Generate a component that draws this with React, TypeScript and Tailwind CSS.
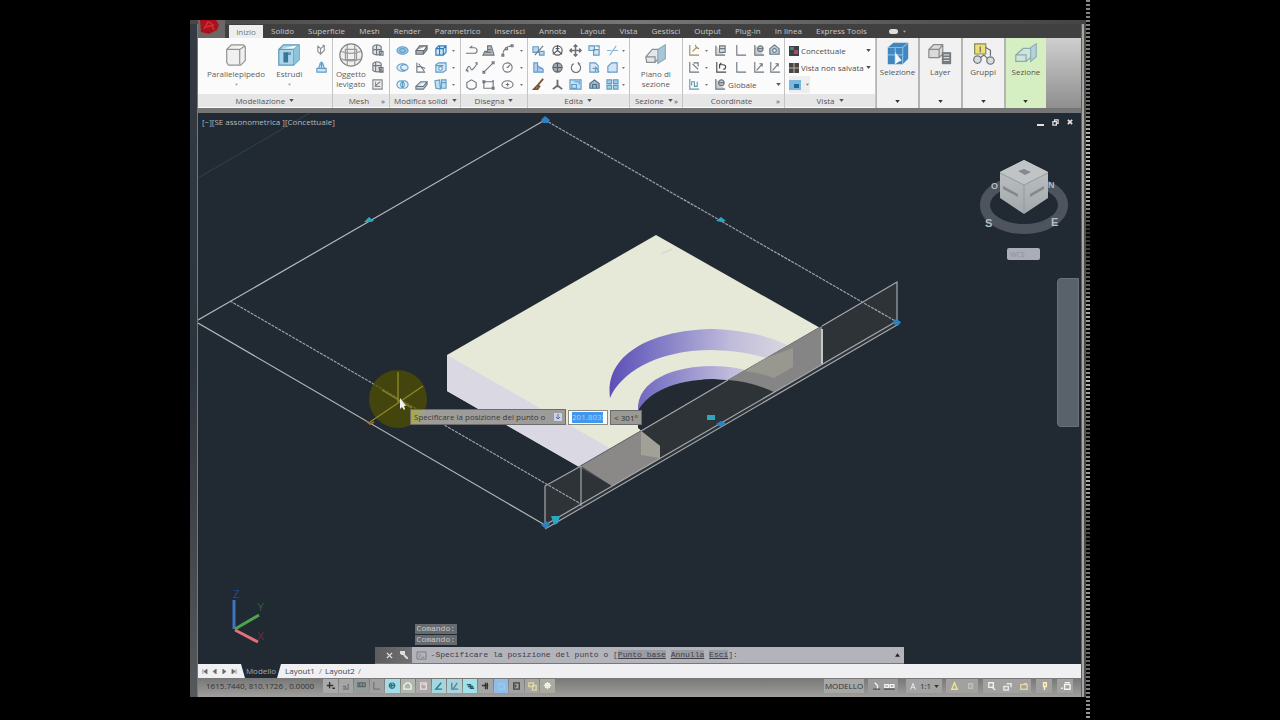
import type { ReactNode } from 'react'

const menuTabs = [
  'Solido',
  'Superficie',
  'Mesh',
  'Render',
  'Parametrico',
  'Inserisci',
  'Annota',
  'Layout',
  'Vista',
  'Gestisci',
  'Output',
  'Plug-in',
  'In linea',
  'Express Tools',
]

const G = '#6f7780'
const B = '#5f9cc8'

const glyphs: Record<string, ReactNode> = {
  polysolid: <path d="M3 2v6l3 3V5l4-3v5l-4 4M3 2l3 3M10 2L8 1" stroke="#8d9094" />,
  presspull: <path d="M2 12V8h2l1-4h4l1 4h2v4zM4 8h6M7 1v6M5 3l2-2 2 2" stroke={B} fill="#cfe3f2" />,
  moreSmooth: <path d="M2 3a5 4 0 0 1 9 0v7a5 3 0 0 1-9 0zM2 6h9M6 1v11M9 8h4v4H9z" stroke={G} fill="#dfe1e3" />,
  refine: <path d="M2 3a5 4 0 0 1 9 0v7a5 3 0 0 1-9 0zM2 5h9M5 1v11M8 7l5 5M9 7h4v5H9z" stroke={G} fill="#e6e6e6" />,
  crease: <path d="M2 2h10v10H2zM4 9l6-5M5 4v5h5" stroke="#85898d" fill="#ececec" />,
  union: <path d="M1 7a6 4 0 1 0 12 0a6 4 0 1 0-12 0M4 7a3 2 0 1 0 6 0a3 2 0 1 0-6 0" stroke={B} fill="#9cc8e8" />,
  subtract: <path d="M1 7a6 4 0 1 0 12 0a6 4 0 1 0-12 0M5 7a4 3 0 0 1 7-2M5 7a4 3 0 0 0 7 2" stroke={B} fill="#dcecf6" />,
  intersect: <path d="M1 7a4 4 0 1 0 8 0a4 4 0 1 0-8 0M5 7a4 4 0 1 0 8 0a4 4 0 1 0-8 0M7 4v6" stroke={B} fill="#e2edf4" />,
  thicken: <path d="M1 7l4-5h8l-3 5zM1 7v4h8l4-5V2M9 7v4" stroke="#666c72" fill="#a9adb2" />,
  slice: <path d="M2 2v10h9M4 3l6 8M2 6h4l5 2" stroke={G} />,
  extract: <path d="M1 9l5-5h7l-4 5zM1 9v3h8l4-5V4" stroke={G} fill="#bcd9ec" />,
  fillet: <path d="M2 5l3-3h8v7l-3 3H2zM2 5h8v7M10 5l3-3M6 2v10" stroke="#2e7ab8" fill="#cde5f6" />,
  taper: <path d="M2 4l3-2h8v8l-3 2H2zM2 5h8M5 8a2 2 0 1 0 4 0a2 2 0 1 0-4 0" stroke={B} fill="#d3e5f0" />,
  shell: <path d="M1 3l5-1 1 10-5-1zM8 2h5v9H8zM8 5h5" stroke={B} fill="#c1def2" />,
  pline: <path d="M1 10h9a3 3 0 0 0 0-6H5M5 4l3-2" stroke={G} />,
  helix: <path d="M1 12h12L10 2H6v6H3zM4 9h6M6 6h4" stroke={G} fill="#b7babd" />,
  arc: <path d="M2 12C2 6 6 2 12 2M1 11h2v2H1zM5 4h2v2H5zM11 1h2v2h-2z" stroke={G} />,
  spline: <path d="M1 11c3-7 4-6 5-3s3 1 7-5M1 10h2v2M11 2h2v2" stroke={G} />,
  line: <path d="M2 12L12 2M1 11h2v2H1zM11 1h2v2h-2z" stroke={G} />,
  circle: <path d="M2 7a5 5 0 1 0 10 0a5 5 0 1 0-10 0M7 7l3-3M6 7h2" stroke={G} />,
  polygon: <path d="M7 2l5 3v5l-3 2H5l-3-2V5z" stroke={G} />,
  rect: <path d="M2 4h10v7H2zM1 3h2v2H1zM11 3h2M11 10h2v2h-2z" stroke={G} />,
  ellipse: <path d="M1 7a6 4 0 1 0 12 0a6 4 0 1 0-12 0M7 5v4M5 7h4" stroke={G} />,
  stretch: (
    <>
      <path d="M1 3h6v6H1zM8 8h5v4H8z" stroke={B} fill="#bcd6e8" />
      <path d="M12 2L3 12" stroke={G} />
    </>
  ),
  align: <path d="M2 2v10h4V2zM6 5l6 4v3H6M8 8h4" stroke={B} fill="#b7cdeb" />,
  brush: <path d="M12 1L6 8M6 8l-4 4h4l2-3z" stroke="#7a5635" fill="#caa062" strokeWidth="2" />,
  gizmo: <path d="M2 7a5 5 0 1 0 10 0a5 5 0 1 0-10 0M7 1v6M7 7l-5 4M7 7l5 4M5 5h4" stroke="#555b61" />,
  move: <path d="M7 1v12M1 7h12M5 3l2-2 2 2M5 11l2 2 2-2M3 5L1 7l2 2M11 5l2 2-2 2" stroke="#6c7277" strokeWidth="1.6" />,
  copy: <path d="M1 2h6v5H1zM6 6h6v6H6zM8 2h4v3" stroke={B} fill="#d6e4ee" />,
  trim: <path d="M1 7h5M8 7h5M11 2L4 12" stroke="#8eb6d2" />,
  rotate3d: <path d="M2 7a5 5 0 1 0 10 0a5 5 0 1 0-10 0M2 7h10M7 2v10" stroke="#5a6066" fill="#a5aab0" />,
  rotate: <path d="M5 3a5 5 0 1 0 5 0M10 3V1M10 3h2M5 3L3 4" stroke="#6a6e72" />,
  offset: <path d="M2 2h6l3 3v7H2zM5 8h3v4M8 6l4 6" stroke={B} fill="#dbe6ef" />,
  chamfer: <path d="M2 12V6l4-4h6v10z" stroke={B} fill="#d5e4f5" />,
  triad: <path d="M7 2v6M7 8l-5 4M7 8l5 4M5 9h4" stroke="#686d72" strokeWidth="2" />,
  scale: <path d="M1 2h12v10H1zM3 7h5v4H3zM6 4h5v3" stroke={B} fill="#bfe0f1" />,
  mirror: <path d="M2 11V6l5-4 5 4v5zM5 11V7h4v4" stroke="#506d86" fill="#9cb8d0" />,
  array: <path d="M1 2h5v4H1zM8 2h5v4H8zM1 8h5v4H1zM8 8h5v4H8z" stroke={B} fill="#a4d0ec" />,
  ucs: <path d="M3 1v11h10M6 3l6 6M7 2h5v4" stroke={G} />,
  ucsWave: <path d="M3 1v11h10M5 8V4h3v5h3V4" stroke="#6298ad" />,
  ucsStar: <path d="M3 1v11h10M6 8l5-5M9 1l1 3 3 1" stroke="#a58a58" />,
  ucsWorld: <path d="M3 1v11h10M6 5a3 3 0 1 0 6 0a3 3 0 1 0-6 0M6 5h6" stroke={G} fill="#c9ced3" />,
  ucsFace: <path d="M2 2v10h10M6 2h6v7H6zM6 5h6" stroke={G} fill="#d8dadc" />,
  ucsAxis: <path d="M3 1v11h10" stroke={G} />,
  ucsView: <path d="M2 5l5-4 5 4v6H2zM5 7a2 2 0 1 0 4 0a2 2 0 1 0-4 0" stroke="#64788a" fill="#bac8d4" />,
  ucsPrev: <path d="M3 1v11h10M6 8V4h4a2 2 0 0 1 0 5M6 4l2-2" stroke="#454a50" />,
  ucsZ: <path d="M3 1v11h10M5 10l6-7M8 3h3v3" stroke={G} />,
}

function Icon({ name }: { name: string }) {
  return (
    <svg viewBox="0 0 14 14" className="h-[13px] w-[13px] shrink-0" fill="none" strokeWidth="1.2" aria-hidden="true">
      {glyphs[name]}
    </svg>
  )
}

function Caret({ className = '' }: { className?: string }) {
  return (
    <svg viewBox="0 0 6 4" className={`h-[3px] w-[5px] shrink-0 ${className}`} aria-hidden="true">
      <path d="M0 0h6L3 4z" fill="currentColor" />
    </svg>
  )
}

function Tool({ name }: { name: string }) {
  return (
    <button type="button" aria-label={name} className="flex h-[17px] items-center justify-center">
      <Icon name={name} />
    </button>
  )
}

function Drop() {
  return (
    <button type="button" aria-label="Altro" className="flex h-[17px] items-center justify-center text-[#777]">
      <svg viewBox="0 0 6 4" className="h-[2px] w-[3px]">
        <path d="M0 0h6L3 4z" fill="currentColor" />
      </svg>
    </button>
  )
}

function Tools({ names }: { names: string[] }) {
  return names.map((name, i) => (name === '>' ? <Drop key={i} /> : <Tool key={i} name={name} />))
}

type PanelProps = { title: string; grow: string; caret?: boolean; corner?: boolean; children: ReactNode }

function Panel({ title, grow, caret, corner, children }: PanelProps) {
  return (
    <section className={`flex min-w-0 basis-0 flex-col border-r border-[#c4c4c4] bg-[#fbfbfb] ${grow}`}>
      <div className="flex h-14 justify-center overflow-hidden pt-1">{children}</div>
      <footer className="flex h-[13px] items-center bg-[#e6e6e6] px-1 text-[#555]">
        <span className="flex flex-1 items-center justify-center gap-1 whitespace-nowrap">
          {title}
          {caret && <Caret />}
        </span>
        {corner && <span className="text-[8px] text-[#444]">»</span>}
      </footer>
    </section>
  )
}

function BigButton({ label, caret, children }: { label: ReactNode; caret?: boolean; children: ReactNode }) {
  return (
    <button type="button" className="flex flex-col items-center text-[#606060]">
      <svg viewBox="0 0 28 28" className="h-[26px] w-[26px]" fill="none" strokeWidth="1.3" aria-hidden="true">
        {children}
      </svg>
      <span className="whitespace-nowrap pt-px leading-[10px]">{label}</span>
      {caret && <Caret className="mt-1 scale-75 text-[#999]" />}
    </button>
  )
}

function SidePanel({ label, green, children }: { label: string; green?: boolean; children: ReactNode }) {
  return (
    <section
      className={`flex min-w-0 grow-[41] basis-0 flex-col ${green ? 'bg-[#d5efc3]' : 'bg-[#f1f1f1]'}`}
    >
      <button type="button" className="flex h-full flex-col items-center pt-[3px] text-[#555]">
        <svg viewBox="0 0 28 28" className="h-[26px] w-[26px]" fill="none" strokeWidth="1.3" aria-hidden="true">
          {children}
        </svg>
        <span className="leading-[10px]">{label}</span>
        <Caret className="mb-[5px] mt-auto text-[#333]" />
      </button>
    </section>
  )
}

function MenuBar() {
  return (
    <nav className="flex h-[14px] items-end bg-[#404040] text-[8px] leading-[14px] text-[#c9c9c9]">
      <button
        type="button"
        aria-label="Menu applicazione"
        className="-mt-1 flex h-[18px] w-[27px] shrink-0 items-start justify-center bg-[#6b6667]"
      >
        <svg viewBox="0 0 27 18" className="h-[18px] w-[27px]">
          <path d="M2 0h16l3 5-2 5-8 4-8-2z" fill="#a9121c" />
          <path d="M6 9l4-7 3 1 3 7M8 7l8-2" stroke="#d0303a" strokeWidth="1.5" fill="none" />
        </svg>
      </button>
      <a href="#inizio" className="ml-1 h-[13px] w-[34px] shrink-0 bg-[#eeeeee] text-center text-[#777]">
        Inizio
      </a>
      <div className="ml-2 flex min-w-0 grow-[596] basis-0 justify-between whitespace-nowrap">
        {menuTabs.map((tab) => (
          <a key={tab} href={`#${tab}`}>
            {tab}
          </a>
        ))}
      </div>
      <div className="flex h-[14px] grow-[192] basis-0 items-center gap-1 pl-[22px]">
        <span className="h-[5px] w-[9px] rounded-sm bg-[#dedede]" />
        <Caret className="scale-75 text-[#aaa]" />
      </div>
    </nav>
  )
}

function Ribbon() {
  return (
    <div className="flex h-[70px] bg-[#b5b5b5] text-[8px] leading-[10px]">
      <Panel title="Modellazione" grow="grow-[135]" caret>
        <div className="flex w-full justify-between pl-[9px] pr-[2px]">
          <BigButton label="Parallelepipedo" caret>
            <path d="M4 8l5-5h13l2 2v15l-5 5H6l-2-3zM4 8h14l6-4M18 8v16" stroke="#929292" fill="#f0f0f0" />
          </BigButton>
          <BigButton label="Estrudi" caret>
            <path d="M3 8l5-5h17v16l-6 6H3zM3 8h16l6-5M19 8v17" stroke="#5e9bb8" fill="#a9d5ea" />
            <path d="M8 11h5v11H8z" fill="#3c7594" />
            <path d="M13 11h3v3h-3z" fill="#5b93af" />
            <path d="M19 8l6-5v16l-6 6z" fill="#8fc3db" />
          </BigButton>
          <div className="flex w-4 flex-col">
            <Tools names={['polysolid', 'presspull']} />
          </div>
        </div>
      </Panel>
      <Panel title="Mesh" grow="grow-[57]" corner>
        <BigButton
          label={
            <>
              Oggetto
              <br />
              levigato
            </>
          }
        >
          <circle cx="14" cy="14" r="12" stroke="#838383" fill="#efefef" />
          <path d="M3 10c7 3 15 3 22 0M3 18c7 3 15 3 22 0M10 3v22M18 3v22M8 8h12v11H8z" stroke="#9a9a9a" />
        </BigButton>
        <div className="ml-1 flex w-4 flex-col">
          <Tools names={['moreSmooth', 'refine', 'crease']} />
        </div>
      </Panel>
      <Panel title="Modifica solidi" grow="grow-[71]" caret>
        <div className="grid grid-cols-[19px_19px_19px_8px] content-start">
          <Tools
            names={['union', 'thicken', 'fillet', '>', 'subtract', 'slice', 'taper', '>', 'intersect', 'extract', 'shell', '>']}
          />
        </div>
      </Panel>
      <Panel title="Disegna" grow="grow-[66]" caret>
        <div className="grid grid-cols-[17px_17px_22px_6px] content-start">
          <Tools
            names={['pline', 'helix', 'arc', '>', 'spline', 'line', 'circle', '>', 'polygon', 'rect', 'ellipse', '>']}
          />
        </div>
      </Panel>
      <Panel title="Edita" grow="grow-[102]" caret>
        <div className="grid grid-cols-[19px_19px_16px_22px_14px_8px] content-start">
          <Tools names={['stretch', 'gizmo', 'move', 'copy', 'trim', '>']} />
          <Tools names={['align', 'rotate3d', 'rotate', 'offset', 'chamfer', '>']} />
          <Tools names={['brush', 'triad', 'scale', 'mirror', 'array', '>']} />
        </div>
      </Panel>
      <Panel title="Sezione" grow="grow-[53]" caret corner>
        <BigButton
          label={
            <>
              Piano di
              <br />
              sezione
            </>
          }
        >
          <path d="M3 16l7-8h8v8l-5 6H4zM3 16h10v6" stroke="#8a8f94" fill="#e4e6e8" />
          <path d="M16 8l8-5v15l-8 5z" stroke="#8fa8b8" fill="#a9c6d8" />
        </BigButton>
      </Panel>
      <Panel title="Coordinate" grow="grow-[102]" corner>
        <div className="flex w-full flex-col px-[2px]">
          <div className="grid grid-cols-[17px_8px_20px_20px_16px_16px]">
            <Tools names={['ucsStar', '>', 'ucsFace', 'ucsAxis', 'ucsWorld', 'ucsView']} />
            <Tools names={['ucs', '>', 'ucsPrev', 'ucsAxis', 'ucsZ', 'ucsZ']} />
          </div>
          <div className="flex">
            <div className="grid shrink-0 grid-cols-[17px_8px_18px]">
              <Tools names={['ucsWave', '>', 'ucsWorld']} />
            </div>
            <label className="flex min-w-0 flex-1 items-center pr-px text-[#555]">
              <select aria-label="UCS" className="min-w-0 flex-1 appearance-none bg-transparent">
                <option>Globale</option>
              </select>
              <Caret />
            </label>
          </div>
        </div>
      </Panel>
      <Panel title="Vista" grow="grow-[91]" caret>
        <div className="flex w-full flex-col px-1 text-[#4d4d4d]">
          <label className="flex h-[17px] items-center gap-[2px]">
            <svg viewBox="0 0 10 10" className="h-[10px] w-[10px] shrink-0">
              <path d="M0 0h10v10H0z" fill="#3b4249" />
              <path d="M1 1h4v3H1z" fill="#3e8f5e" />
              <path d="M5 4h4v4H5z" fill="#a64c66" />
            </svg>
            <select aria-label="Stile di visualizzazione" className="min-w-0 flex-1 appearance-none bg-transparent">
              <option>Concettuale</option>
            </select>
            <Caret />
          </label>
          <label className="flex h-[17px] items-center gap-[2px]">
            <svg viewBox="0 0 10 10" className="h-[10px] w-[10px] shrink-0">
              <path d="M0 0h10v10H0z" fill="#4a4540" />
              <path d="M5 0v10M0 5h10" stroke="#bbb5ac" />
            </svg>
            <select aria-label="Vista" className="min-w-0 flex-1 appearance-none bg-transparent">
              <option>Vista non salvata</option>
            </select>
            <Caret />
          </label>
          <button type="button" aria-label="Finestre" className="flex h-[17px] w-[21px] items-center gap-1 bg-[#eee]">
            <svg viewBox="0 0 12 10" className="h-[10px] w-3">
              <path d="M0 0h12v10H0z" fill="#7db9dc" />
              <path d="M5 4h5v4H5z" fill="#24669b" />
            </svg>
            <Caret className="scale-75 text-[#777]" />
          </button>
        </div>
      </Panel>
      <div className="flex min-w-0 grow-[171] basis-0 gap-[2px] pl-px">
        <SidePanel label="Selezione">
          <path d="M3 7l6-5h16v17l-6 6H3z" fill="#4087bf" />
          <path d="M3 7h16l6-5M19 7v18M11 7v18M3 15h16" stroke="#86bbe0" />
          <path d="M11 12l7 9-3 1-4 3z" fill="#f4f8fb" />
        </SidePanel>
        <SidePanel label="Layer">
          <path d="M2 9l5-5h10v10l-4 4H2zM2 9h11v9M13 9l4-5" stroke="#8a8a8a" fill="#dadada" />
          <path d="M16 12h10v13H16z" fill="#767b80" />
          <path d="M18 15h6M18 18h6M18 21h6" stroke="#d5d5d5" />
        </SidePanel>
        <SidePanel label="Gruppi">
          <path d="M5 3h12v11H5z" stroke="#8b875a" fill="#ecdf76" />
          <circle cx="8" cy="20" r="4" stroke="#6f747a" fill="#d7dade" />
          <circle cx="22" cy="21" r="4" stroke="#6f747a" fill="#d7dade" />
          <path d="M17 7l5 3v6M11 18l4-3 4 4M11 6v6" stroke="#666b70" />
        </SidePanel>
        <SidePanel label="Sezione" green>
          <path d="M3 15l8-7h9v9l-6 5H3zM3 15h11v7" stroke="#8fa9a6" fill="#cfe3e0" />
          <path d="M19 7l6-4v14l-6 5z" stroke="#8fb0b6" fill="#b3d3d8" />
        </SidePanel>
      </div>
      <div className="grow-[35] basis-0 bg-linear-to-b from-[#cfcfcf] to-[#8f8f8f]" />
    </div>
  )
}

function Drawing() {
  return (
    <svg
      viewBox="198 113 883 551"
      preserveAspectRatio="xMidYMid slice"
      className="absolute inset-0 h-full w-full"
      role="img"
      aria-label="Solido con piano di sezione"
    >
      <defs>
        <linearGradient id="bore" gradientUnits="userSpaceOnUse" x1="610" y1="0" x2="795" y2="0">
          <stop offset="0" stopColor="#5c4fb8" />
          <stop offset="0.3" stopColor="#8680c8" />
          <stop offset="0.65" stopColor="#bfbbda" />
          <stop offset="1" stopColor="#dedbe2" />
        </linearGradient>
        <linearGradient id="cube" x1="0" y1="0" x2="0" y2="1">
          <stop offset="0" stopColor="#c0c4c6" />
          <stop offset="1" stopColor="#a3a8ab" />
        </linearGradient>
      </defs>

      {/* solid */}
      <path d="M656 235L822 329V364L774 392L620 462L612 486L447 391V355z" fill="#e6e8d8" />
      <path d="M447 355L613 450V486L447 391z" fill="#dad8e3" />
      <path d="M638 428V411C640 388 680 378 715 379Q748 380 774 392L660 459V446z" fill="#232a31" />
      <path d="M610 398C604 350 660 329 715 329Q762 331 793 348L766 358Q745 351 712 350C655 350 620 374 610 398z" fill="url(#bore)" />
      <path d="M638 411C636 380 675 366 712 366Q735 366 752 372L728 380Q718 379 712 379C675 380 648 392 638 411z" fill="url(#bore)" />

      {/* section plane */}
      <path d="M545 486L897 282V324L545 528z" fill="#30353a" fillOpacity="0.85" />
      <path d="M728 380L822 326V364L774 392Q750 381 728 380z" fill="#858585" />
      <path d="M745 371L766 358L793 348V367L774 378Q760 373 745 371z" fill="#999890" />
      <path d="M581 466L641 431L660 446V459L612 486z" fill="#8a8988" />
      <path d="M641 431L660 446V458L641 455z" fill="#a2a198" />
      <path d="M545 525V486L581 466M641 431L728 380M822 326L897 282V324M581 466V506" stroke="#a4a8ac" strokeWidth="1.2" fill="none" />
      <path d="M822 329V364" stroke="#c5c5c2" strokeWidth="2" />
      <path d="M545 525L897 321M545 529L897 325" stroke="#a4a8ac" strokeWidth="1.2" fill="none" />

      <path d="M198 178L320 107" stroke="#2c4648" />
      <path d="M545 120L198 320M198 323L545 525" stroke="#b4b8bb" strokeWidth="1.2" fill="none" />
      <path d="M545 120L897 322M230 301L581 504" stroke="#9da2a6" strokeWidth="1.2" strokeDasharray="3 1" fill="none" />
      <path d="M661 254L672 249" stroke="#cfd5c0" />

      {/* grips */}
      <g fill="#2b83c4">
        <path d="M541 120l4-4 5 4-2 3h-5z" />
        <path d="M892 323l4-4 5 3-3 4z" />
        <path d="M541 525l5-4 4 3-4 5z" />
        <path d="M716 424l5-3 5 2-5 4z" />
      </g>
      <g fill="#2fa6c0">
        <path d="M364 222l5-5 5 4-3 1z" />
        <path d="M716 221l5-4 5 4-4 1z" />
        <path d="M707 415h8v5h-8z" />
        <path d="M551 516h9l-2 7-4 2z" />
      </g>

      {/* highlighted cursor */}
      <circle cx="398" cy="399" r="29" fill="#4f4f02" fillOpacity="0.75" />
      <path d="M398 372V402M370 422L423 386M382 390L412 408" stroke="#8c862b" strokeWidth="1.4" />
      <path d="M366 421l4 3 4-2" stroke="#b06c28" strokeWidth="1.5" fill="none" />
      <path d="M400 398v11l2-2 2 3 1-1-1-3h2z" fill="#f2f2f2" />

      {/* view cube */}
      <ellipse cx="1024" cy="205" rx="39" ry="24" stroke="#4d545d" strokeWidth="10" fill="none" />
      <path d="M1000 172L1024 160L1048 172V198L1024 214L1000 198z" fill="url(#cube)" />
      <path d="M1000 172L1024 160L1048 172L1024 185z" fill="#c0c4c6" />
      <path d="M1000 173L1024 185L1048 173M1024 185V213" stroke="#959a9e" fill="none" />
      <path d="M1018 171l6-2 7 3-6 3zM1003 186l15 8v3l-15-8zM1030 194l14-8v3l-14 8z" fill="#85898d" />
      <g fontFamily="Liberation Sans, sans-serif" fontSize="11" fontWeight="bold" fill="#b7bcc1">
        <text x="985" y="227">S</text>
        <text x="1051" y="226">E</text>
        <text x="991" y="189" fontSize="9">O</text>
        <text x="1048" y="188" fontSize="9">N</text>
      </g>
      <rect x="1007" y="248" width="33" height="12" rx="2" fill="#a9adb7" />
      <text x="1010" y="257" fontFamily="Open Sans, sans-serif" fontSize="7" fill="#8c9098">
        WCS
      </text>

      {/* ucs icon */}
      <path d="M234 629V600" stroke="#3c74bd" strokeWidth="3" />
      <path d="M235 629L259 615" stroke="#4fa24d" strokeWidth="3" />
      <path d="M235 630L258 642" stroke="#e0707a" strokeWidth="3" />
      <g fontFamily="Liberation Sans, sans-serif" fontSize="11">
        <text x="233" y="598" fill="#244a8c">Z</text>
        <text x="257" y="611" fill="#2f5b3d">Y</text>
        <text x="257" y="640" fill="#6b2c3c">X</text>
      </g>
    </svg>
  )
}

function DynamicInput() {
  return (
    <form className="absolute left-[212px] top-[296px] flex h-4 items-center gap-[2px] text-[8px]">
      <label
        htmlFor="distance"
        className="flex h-4 w-[156px] items-center justify-between whitespace-nowrap border border-[#6c6c6c] bg-linear-to-r from-[#a9a838] from-0% via-[#9d9c9b] via-10% to-[#9d9c9b] px-[3px] text-[#3a3a3a]"
      >
        Specificare la posizione del punto o
        <svg viewBox="0 0 8 8" className="h-2 w-2">
          <path d="M0 0h8v8H0z" fill="#ccd0e4" />
          <path d="M4 1v5M2 4l2 2 2-2" stroke="#5d6aa3" fill="none" />
        </svg>
      </label>
      <span className="flex h-[15px] w-10 items-center border border-[#8b8b83] bg-white px-[3px]">
        <input
          id="distance"
          defaultValue="201.8035"
          className="h-[11px] w-[31px] bg-[#4197ee] text-[8px] text-[#a5d2fb]"
        />
      </span>
      <output className="h-[15px] w-8 border border-[#6c6c6c] bg-[#9a9993] text-center leading-[13px] text-[#333]">
        &lt; 301°
      </output>
    </form>
  )
}

function CommandLine() {
  return (
    <div className="relative mx-auto w-[60%] font-['Liberation_Mono',monospace] text-[8px]">
      <div className="mb-[2px] ml-10 flex w-[42px] flex-col gap-px text-[#c9c9c9]">
        <p className="h-[10px] overflow-hidden bg-[#676b70] px-[2px] leading-[10px]">Comando:</p>
        <p className="h-[10px] overflow-hidden bg-[#676b70] px-[2px] leading-[10px]">Comando:</p>
      </div>
      <div className="flex h-[17px] items-center border-b border-[#777] bg-[#b3b3bb] text-[#404047]">
        <div className="flex h-full w-[37px] items-center justify-around bg-linear-to-r from-[#5c5c5e] to-[#707072] text-[#ddd]">
          <button type="button" aria-label="Chiudi" className="pl-2">
            <svg viewBox="0 0 8 8" className="h-[7px] w-[7px]" stroke="currentColor" strokeWidth="1.6">
              <path d="M1 1l6 6M7 1L1 7" />
            </svg>
          </button>
          <button type="button" aria-label="Personalizza">
            <svg viewBox="0 0 8 8" className="h-2 w-2" stroke="currentColor" strokeWidth="2" fill="none">
              <path d="M1 3V1h3v2H1M4 4l4 4" />
            </svg>
          </button>
        </div>
        <svg viewBox="0 0 12 10" className="ml-1 h-[9px] w-[11px]" fill="none" stroke="#77777f">
          <path d="M1 1h10v8H1zM3 3l2 2-2 2M6 7h3" />
        </svg>
        <p className="flex-1 whitespace-pre pl-1">
          -Specificare la posizione del punto o [
          <span className="bg-[#9b9ba3] underline">Punto base</span>{' '}
          <span className="bg-[#9b9ba3] underline">Annulla</span>{' '}
          <span className="bg-[#9b9ba3] underline">Esci</span>]:
        </p>
        <button type="button" aria-label="Cronologia" className="pr-1">
          <svg viewBox="0 0 6 4" className="h-1 w-[5px]">
            <path d="M0 4h6L3 0z" fill="#222" />
          </svg>
        </button>
      </div>
    </div>
  )
}

function Canvas() {
  return (
    <main className="relative flex flex-1 flex-col overflow-hidden bg-[#212932]">
      <Drawing />
      <div className="relative flex h-[18px] items-center justify-between pl-1 pr-2 text-[8px] text-[#b5babf]">
        <span>[−][SE assonometrica ][Concettuale]</span>
        <div className="flex items-center gap-2 text-[#e0e0e0]">
          <button type="button" aria-label="Riduci">
            <svg viewBox="0 0 7 7" className="h-[7px] w-[7px]">
              <path d="M0 5h7v2H0z" fill="currentColor" />
            </svg>
          </button>
          <button type="button" aria-label="Ripristina">
            <svg viewBox="0 0 8 8" className="h-[7px] w-[7px]" fill="none" stroke="currentColor" strokeWidth="1.4">
              <path d="M3 3V1h4v4H5M1 3h4v4H1z" />
            </svg>
          </button>
          <button type="button" aria-label="Chiudi disegno">
            <svg viewBox="0 0 7 7" className="h-[6px] w-[6px]" stroke="currentColor" strokeWidth="2">
              <path d="M1 1l5 5M6 1L1 6" />
            </svg>
          </button>
        </div>
      </div>
      <aside className="absolute right-[2px] top-[165px] h-[149px] w-[22px] rounded-l-sm border border-[#68717a] bg-[#59626b]" />
      <DynamicInput />
      <div className="flex-1" />
      <CommandLine />
    </main>
  )
}

function LayoutTabs() {
  return (
    <div className="flex h-[14px] items-stretch bg-[#f0f0f2] text-[8px] leading-[14px] text-[#444]">
      <div className="flex w-[43px] items-center justify-around px-[2px]">
        {['M1 0v6M6 0L2 3l4 3z', 'M5 0L1 3l4 3z', 'M2 0l4 3-4 3z', 'M1 0l4 3-4 3zM6 0v6'].map((d) => (
          <button key={d} type="button" aria-label="Scorri layout">
            <svg viewBox="0 0 7 6" className="h-[5px] w-[6px]" fill="#666">
              <path d={d} stroke="#777" strokeWidth="0.8" />
            </svg>
          </button>
        ))}
      </div>
      <button type="button" className="w-[40px] bg-[#212932] text-[#a3aab1] [clip-path:polygon(0_0,100%_0,90%_100%,10%_100%)]">
        Modello
      </button>
      <button type="button" className="w-[38px] text-center">
        Layout1
      </button>
      <span className="text-[#777]">/</span>
      <button type="button" className="w-[36px] text-center">
        Layout2
      </button>
      <span className="text-[#777]">/</span>
    </div>
  )
}

const toggles = [
  { id: 'Deduci vincoli', tone: 'bg-[#aaaaaa]', d: 'M5 1v7M2 5h7M8 8h3', ink: '#333' },
  { id: 'Snap', tone: 'bg-[#a6a6a6]', d: 'M3 9h6V3M3 6h3v3', ink: '#777' },
  { id: 'Griglia', tone: 'bg-[#959c9c]', d: 'M2 2h8v4H2zM4 2v4M7 2v4', ink: '#5f6568' },
  { id: 'Orto', tone: 'bg-[#a0a0a0]', d: 'M3 1v8h7', ink: '#777' },
  { id: 'Polare', tone: 'bg-[#a5dbe4]', d: 'M2 5h7M5 2a3 3 0 1 0 1 0M5 3v4', ink: '#287384' },
  { id: 'Osnap', tone: 'bg-[#b0b7ac]', d: 'M2 9V5l3-3h3l2 3v4z', ink: '#f2f2ee' },
  { id: 'Osnap 3D', tone: 'bg-[#a8a8a8]', d: 'M3 2h6v7H3zM5 4h3', ink: '#f0dadc' },
  { id: 'Otrack', tone: 'bg-[#a4d6df]', d: 'M9 2L3 9h7', ink: '#317989' },
  { id: 'Ducs', tone: 'bg-[#a9d4de]', d: 'M3 2v7h7M5 8l4-6', ink: '#56818a' },
  { id: 'Din', tone: 'bg-[#a4e0e8]', d: 'M2 4h4v4h4M3 6h6', ink: '#235d66' },
  { id: 'Spessore', tone: 'bg-[#a5a5a5]', d: 'M2 5h7M6 2v7M8 2v7', ink: '#333' },
  { id: 'Trasparenza', tone: 'bg-[#8fbfe8]', d: 'M3 3h6v6H3z', ink: '#9ac9ef' },
  { id: 'Proprietà', tone: 'bg-[#a2a2a2]', d: 'M3 2h6v7H3zM5 4v3', ink: '#444' },
  { id: 'Selezione ciclica', tone: 'bg-[#a6a69e]', d: 'M2 2h5v4H2zM6 5h4v5H6z', ink: '#ddd9a8' },
  { id: 'Monitor annotazioni', tone: 'bg-[#aaaa9f]', d: 'M6 1v8M2 5h8M4 3h4v4H4z', ink: '#f0f0e8' },
]

const tray = [
  [
    { id: 'Visualizza annotazioni', d: 'M6 2L3 9h6z', ink: '#ece291' },
    { id: 'Aggiungi scale', d: 'M4 3h4v5H4z', ink: '#c0c0b8' },
  ],
  [
    { id: 'Area di lavoro', d: 'M3 2h5v5H3zM6 6l4 4', ink: '#eeeeee' },
    { id: 'Blocca barre', d: 'M2 6h5v4H2zM5 3h5v4', ink: '#e6e6e6' },
    { id: 'Hardware', d: 'M3 4h7v5H3zM6 3h4', ink: '#e2d3a3' },
  ],
  [{ id: 'Isola oggetti', d: 'M5 2h3v4H5zM6 6v4', ink: '#fff0bc' }],
  [{ id: 'Menu barra di stato', d: 'M1 8h2M5 4h6v5H5zM5 2h6', ink: '#f3f3f3' }],
]

function StatusBar() {
  return (
    <footer className="flex h-[19px] items-center bg-linear-to-b from-[#777] to-[#a09f9d] pb-[3px] text-[8px] text-[#333]">
      <span className="w-[125px] whitespace-nowrap pl-2">1615.7440, 810.1726 , 0.0000</span>
      <div className="flex w-[232px] gap-px">
        {toggles.map((t) => (
          <button key={t.id} type="button" aria-label={t.id} className={`flex h-[14px] flex-1 items-center justify-center ${t.tone}`}>
            <svg viewBox="0 0 12 11" className="h-[10px] w-[11px]" fill="none" stroke={t.ink} strokeWidth="1.5">
              <path d={t.d} />
            </svg>
          </button>
        ))}
      </div>
      <div className="ml-auto flex items-center gap-1 pr-2">
        <button type="button" className="h-[14px] w-10 bg-[#a7a7a5] text-center">
          MODELLO
        </button>
        <button type="button" aria-label="Layout rapidi" className="flex h-[14px] w-[30px] items-center bg-[#9b9b9b]">
          <svg viewBox="0 0 30 11" className="h-[10px] w-[30px]" fill="none" stroke="#f3f3f3" strokeWidth="1.5">
            <path d="M6 2l3 3v4M17 4h4v3h-4zM23 4h4v3h-4z" />
            <path d="M4 9h8M16 9h12" stroke="#555" />
          </svg>
        </button>
        <button type="button" className="ml-1 flex h-[14px] w-9 items-center justify-center gap-[3px] bg-[#a3a3a3]">
          <svg viewBox="0 0 10 10" className="h-[9px] w-2" fill="none" stroke="#e8e8e8" strokeWidth="1.2">
            <path d="M5 1L2 9M5 1l3 8M3 6h4" />
          </svg>
          1:1
          <Caret />
        </button>
        <div className="flex gap-[5px]">
          {tray.map((group) => (
            <div key={group[0].id} className="flex bg-[#a1a19f]">
              {group.map((t) => (
                <button key={t.id} type="button" aria-label={t.id} className="flex h-[14px] w-4 items-center justify-center">
                  <svg viewBox="0 0 12 11" className="h-[10px] w-[11px]" fill="none" stroke={t.ink} strokeWidth="1.6">
                    <path d={t.d} />
                  </svg>
                </button>
              ))}
            </div>
          ))}
        </div>
      </div>
    </footer>
  )
}

export default function App() {
  return (
    <div className="flex min-h-screen bg-black px-[190px] font-['Open_Sans','Liberation_Sans',sans-serif]">
      <div className="flex min-w-0 flex-1 flex-col pb-[23px] pt-5">
        <div className="h-1 bg-linear-to-r from-[#484848] via-[#777] to-[#444]" />
        <div className="flex flex-1 bg-linear-to-b from-[#343b43] via-[#2d333b] to-[#56595b] pl-[7px]">
          <div className="flex min-w-0 flex-1 flex-col border-l border-[#6f7a84]">
            <MenuBar />
            <Ribbon />
            <div className="h-[5px] bg-[#757575]" />
            <Canvas />
            <LayoutTabs />
            <StatusBar />
          </div>
          <div className="w-[3px] border-l border-[#59615f] bg-[#a6a6a4]" />
          <div className="w-[2px] bg-[#4d4d49]" />
        </div>
      </div>
      <div className="flex w-1 bg-[repeating-linear-gradient(0deg,#000_0px,#000_2px,#b9b9b5_2px,#b9b9b5_4px)]">
        <div className="w-full bg-[linear-gradient(#0004,#0006_15%,#0000_19%,#0002_28%,#000b_32%,#0007_40%,#0001_43%,#0008_50%,#0000_53%,#0008_60%,#0001_67%,#000a_75%,#0003_82%,#0007_92%,#0002)]" />
      </div>
    </div>
  )
}
